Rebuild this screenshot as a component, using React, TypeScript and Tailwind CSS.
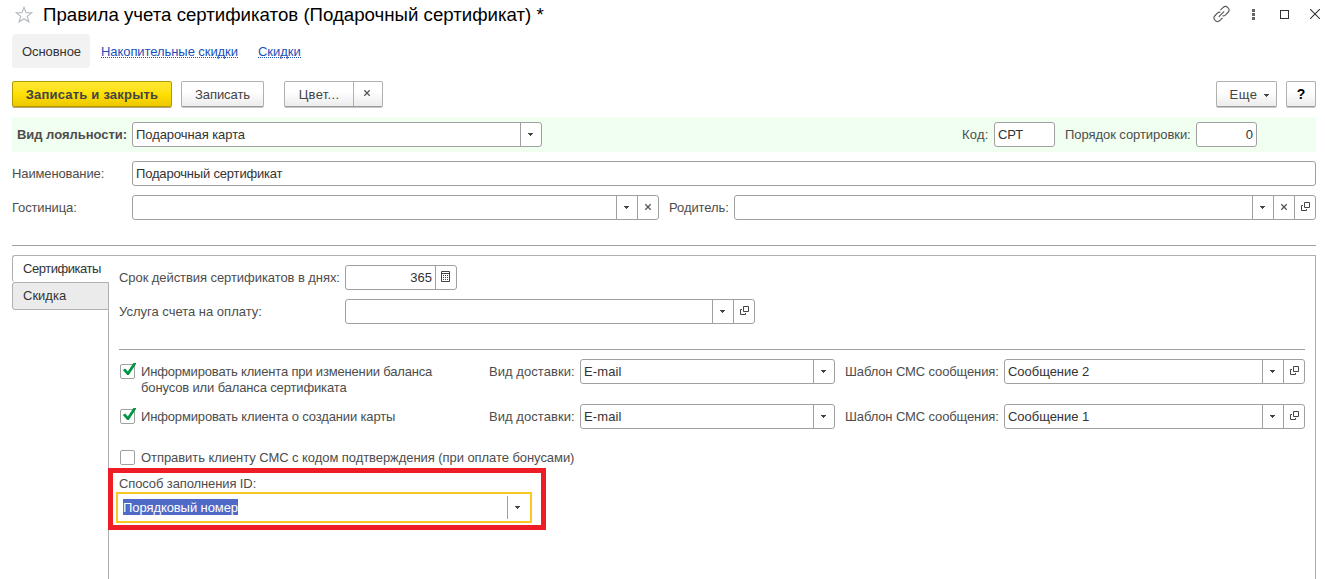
import React, { type ReactNode } from "react";

type Action = "list" | "clear" | "open" | "calc";

const Caret = () => (
  <svg width="5" height="3" viewBox="0 0 5 3" className="mr-[2px] mb-px block" fill="#444">
    <path d="M0 0h5v1H4v1H3v1H2V2H1V1H0z" />
  </svg>
);

const Cross = () => (
  <svg width="6" height="6" viewBox="0 0 6 6" className="mr-px mb-[2px] block overflow-visible" stroke="#555" strokeWidth="1.3">
    <path d="M.3 .3l5.4 5.4M5.7 .3L.3 5.7" />
  </svg>
);

const OpenIcon = () => (
  <svg width="9" height="9" viewBox="0 0 9 9" className="mb-[2px] ml-px block" fill="none" stroke="#444">
    <path d="M3.5 .5h5v5h-5zM2 3.5H.5v5h5V7" />
  </svg>
);

const CalcIcon = () => (
  <svg width="9" height="11" viewBox="0 0 9 11" className="mr-px mb-[2px] block" fill="none" stroke="#444">
    <path d="M.5 .5h8v10h-8zM1 2.5h7" />
    <path d="M2 4.5h1M4 4.5h1M6 4.5h1M2 6.5h1M4 6.5h1M6 6.5h1M2 8.5h1M4 8.5h1M6 8.5h1" />
  </svg>
);

const icons: Record<Action, ReactNode> = {
  list: <Caret />,
  clear: <Cross />,
  open: <OpenIcon />,
  calc: <CalcIcon />,
};

function Field({
  value,
  className,
  actions = [],
  numeric,
  spacing = "",
}: {
  value?: string;
  className: string;
  actions?: Action[];
  numeric?: boolean;
  spacing?: string;
}) {
  return (
    <div className={`flex h-[25px] shrink-0 overflow-hidden rounded-[3px] border border-[#a0a0a0] bg-white ${className}`}>
      <div className={`flex-1 whitespace-nowrap px-[3px] leading-[23px] text-[#333] ${numeric ? "text-right" : ""} ${spacing}`}>
        {value}
      </div>
      {actions.map((a) => (
        <div key={a} className="flex w-[21px] shrink-0 items-center justify-center border-l border-[#a0a0a0]">
          {icons[a]}
        </div>
      ))}
    </div>
  );
}

function Label({ children, className = "" }: { children: ReactNode; className?: string }) {
  return <div className={`shrink-0 whitespace-nowrap leading-[25px] ${className}`}>{children}</div>;
}

function Check({ checked }: { checked?: boolean }) {
  return (
    <div className="mt-[5px] ml-[1px] h-[15px] w-[15px] shrink-0 rounded-[2px] border border-[#a0a0a0] bg-white">
      {checked && (
        <svg width="16" height="15" viewBox="0 0 16 15" className="-mt-[2px] block max-w-none overflow-visible" fill="#009646">
          <path d="M1.8 7L4.2 5.4L6.8 8.4L12.4 0H15V1L7.8 12H6.2z" />
        </svg>
      )}
    </div>
  );
}

const button =
  "flex h-[26px] items-center justify-center rounded-[2px] border border-[#b0b0b0] border-b-[#999] bg-linear-to-b from-white from-40% to-[#ececec] shadow-[0_1px_0_#c8c8c8]";

function NotifyRow({ label, message, tall, spacing }: { label: ReactNode; message: string; tall?: boolean; spacing: string }) {
  return (
    <div className={`flex w-[1186px] items-start ${tall ? "h-[45px]" : "h-[41px]"}`}>
      <Check checked />
      <div className={`ml-[6px] w-[348px] pt-[5px] leading-[16px] whitespace-nowrap ${spacing}`}>{label}</div>
      <Label className="w-[91px] tracking-[0.05px]">Вид доставки:</Label>
      <Field className="w-[255px]" value="E-mail" actions={["list"]} spacing="tracking-[0.1px]" />
      <Label className="ml-[10px] w-[159px] tracking-[-0.12px]">Шаблон СМС сообщения:</Label>
      <Field className="w-[301px]" value={message} actions={["list", "open"]} spacing="tracking-[-0.04px]" />
    </div>
  );
}

export default function App() {
  return (
    <div className="flex h-[579px] w-[1325px] flex-col overflow-hidden bg-white font-['Liberation_Sans',Arial,sans-serif] text-[13px] text-[#4d4d4d]">
      <header className="flex h-[34px] shrink-0 items-start pl-[15px]">
        <svg width="18" height="18" viewBox="0 0 18 18" className="mt-[6px]" fill="none" stroke="#b3b8be" strokeWidth="1.1">
          <path d="M9 1.2l2 5.5 5.8.1-4.6 3.6 1.7 5.6L9 12.7 4.1 16l1.7-5.6L1.2 6.8 7 6.7z" />
        </svg>
        <h1 className="ml-[10px] flex-1 whitespace-nowrap text-[18.67px] leading-[30px] text-black">
          Правила учета сертификатов (Подарочный сертификат) *
        </h1>
        <div className="flex h-[28px] items-center">
          <svg width="16" height="16" viewBox="0 0 16 16" className="mr-[23px] overflow-visible" fill="none" stroke="#555" strokeWidth="1.1">
            <path d="M7.4 4.2L10 1.6a3.1 3.1 0 0 1 4.9 4.9L12.3 9.1Q11.3 10 9.6 9.8" />
            <path d="M9.6 11.8L7 14.4a3.1 3.1 0 0 1-4.9-4.9L4.7 6.9Q5.7 6 7.4 6.2" />
            <path d="M5.8 10.8l5.4-5.4" />
          </svg>
          <svg width="3" height="11" viewBox="0 0 3 11" className="mr-[25px]" fill="#666">
            <path d="M0 0h3v3H0zM0 4h3v3H0zM0 8h3v3H0z" />
          </svg>
          <div className="mt-px mr-[21px] h-[9px] w-[9px] border border-[#333]" />
          <svg width="10" height="10" viewBox="0 0 10 10" className="mr-[5px]" stroke="#333" strokeWidth="1.1">
            <path d="M0 0l10 10M10 0L0 10" />
          </svg>
        </div>
      </header>

      <nav className="flex h-[34px] shrink-0 items-center pl-[12px]">
        <div className="h-[34px] w-[78px] rounded-[4px] bg-[#f2f2f2] pl-[10px] leading-[36px] tracking-[-0.08px] text-[#333]">Основное</div>
        <a className="ml-[11px] h-[14px] border-b border-dotted border-[#1a50b8] leading-[16px] tracking-[-0.07px] text-[#1a50b8]">
          Накопительные скидки
        </a>
        <a className="ml-[20px] h-[14px] border-b border-dotted border-[#1a50b8] leading-[16px] text-[#1a50b8]">Скидки</a>
      </nav>

      <div className="mt-[13px] flex h-[36px] shrink-0 items-start pr-[9px] pl-[12px] text-[#444]">
        <button className="flex h-[26px] w-[160px] items-center justify-center rounded-[2px] border border-[#b39b00] bg-linear-to-b from-[#ffe833] via-[#ffe000] to-[#ecc800] pt-[2px] font-bold tracking-[0.2px] shadow-[0_1px_0_#b5a77a]">
          Записать и закрыть
        </button>
        <button className={`${button} ml-[9px] w-[83px] pt-[2px] tracking-[-0.05px]`}>Записать</button>
        <div className={`${button} ml-[20px] w-[99px]`}>
          <span className="flex-1 pt-[2px] text-center tracking-[0.3px]">Цвет...</span>
          <span className="flex h-full w-[29px] items-center justify-center border-l border-[#b0b0b0] pr-px">
            <Cross />
          </span>
        </div>
        <button className={`${button} ml-auto w-[61px] pl-[6px]`}>
          <span className="mr-[7px] pt-[2px] tracking-[0.5px]">Еще</span>
          <svg width="5" height="3" viewBox="0 0 5 3" className="mt-[2px]" fill="#444">
            <path d="M0 0h5v1H4v1H3v1H2V2H1V1H0z" />
          </svg>
        </button>
        <button className={`${button} ml-[9px] w-[30px] pt-px text-[14px] font-bold text-black`}>?</button>
      </div>

      <div className="mr-[9px] ml-[12px] flex h-[35px] shrink-0 items-start bg-[#f0fff0] pt-[5px] pl-[5px]">
        <Label className="w-[115px] font-bold tracking-[-0.03px]">Вид лояльности:</Label>
        <Field className="w-[410px]" value="Подарочная карта" actions={["list"]} spacing="tracking-[-0.08px]" />
        <Label className="ml-[420px] w-[32px] tracking-[0.2px]">Код:</Label>
        <Field className="w-[61px]" value="СРТ" spacing="tracking-[-0.14px]" />
        <Label className="ml-[10px] w-[131px] tracking-[-0.06px]">Порядок сортировки:</Label>
        <Field className="w-[61px]" value="0" numeric />
      </div>

      <div className="mt-[9px] ml-[12px] flex shrink-0">
        <Label className="w-[120px] tracking-[-0.12px]">Наименование:</Label>
        <Field className="w-[1184px]" value="Подарочный сертификат" spacing="tracking-[-0.18px]" />
      </div>

      <div className="mt-[9px] ml-[12px] flex shrink-0">
        <Label className="w-[120px] tracking-[-0.12px]">Гостиница:</Label>
        <Field className="w-[527px]" actions={["list", "clear"]} />
        <Label className="ml-[10px] w-[65px] tracking-[-0.08px]">Родитель:</Label>
        <Field className="w-[582px]" actions={["list", "clear", "open"]} />
      </div>

      <div className="mt-[25px] mr-[9px] ml-[12px] h-px shrink-0 bg-[#a0a0a0]" />

      <div className="mt-[9px] mr-[9px] ml-[12px] flex min-h-0 flex-1">
        <div className="flex w-[97px] shrink-0 flex-col text-[#333]">
          <div className="h-[27px] rounded-tl-[3px] rounded-bl-[3px] border-t border-l border-[#b0b0b0] pl-[10px] leading-[26px] tracking-[-0.45px]">
            Сертификаты
          </div>
          <div className="h-[28px] rounded-l-[3px] border border-[#b0b0b0] bg-[#ebebeb] pl-[10px] leading-[26px]">Скидка</div>
          <div className="flex-1 border-r border-[#b0b0b0]" />
        </div>
        <section className="flex flex-1 flex-col border-t border-r border-[#b0b0b0] pt-[9px] pl-[10px]">
          <div className="flex h-[34px] shrink-0">
            <Label className="w-[226px] tracking-[-0.07px]">Срок действия сертификатов в днях:</Label>
            <Field className="w-[112px]" value="365" numeric actions={["calc"]} />
          </div>
          <div className="flex h-[25px] shrink-0">
            <Label className="w-[226px]">Услуга счета на оплату:</Label>
            <Field className="w-[410px]" actions={["list", "open"]} />
          </div>
          <div className="mt-[25px] mb-[9px] h-px w-[1186px] shrink-0 bg-[#a0a0a0]" />
          <NotifyRow
            tall
            spacing="tracking-[-0.17px]"
            message="Сообщение 2"
            label={
              <>
                Информировать клиента при изменении баланса
                <br />
                <span className="tracking-[-0.14px]">бонусов или баланса сертификата</span>
              </>
            }
          />
          <NotifyRow spacing="tracking-[-0.15px]" message="Сообщение 1" label="Информировать клиента о создании карты" />
          <div className="flex h-[23px] shrink-0 items-start">
            <Check />
            <div className="ml-[6px] whitespace-nowrap pt-[5px] leading-[16px] tracking-[-0.063px]">
              Отправить клиенту СМС с кодом подтверждения (при оплате бонусами)
            </div>
          </div>
          <div className="-ml-[11px] h-[62px] w-[438px] shrink-0 border-[5px] border-[#ee1c24] pl-[3px]">
            <div className="h-[19px] pl-[3px] leading-[21px] tracking-[-0.11px]">Способ заполнения ID:</div>
            <div className="flex h-[31px] w-[416px] border-2 border-[#f9c820] bg-white">
              <div className="flex-1 pt-[5px] pl-[5px]">
                <span className="block h-[16px] w-[115px] whitespace-nowrap bg-[#4f69c6] leading-[18px] tracking-[-0.08px] text-white">
                  Порядковый номер
                </span>
              </div>
              <div className="my-[2px] flex w-[23px] items-center justify-center border-l border-[#a0a0a0] pr-px">
                <Caret />
              </div>
            </div>
          </div>
        </section>
      </div>
    </div>
  );
}
